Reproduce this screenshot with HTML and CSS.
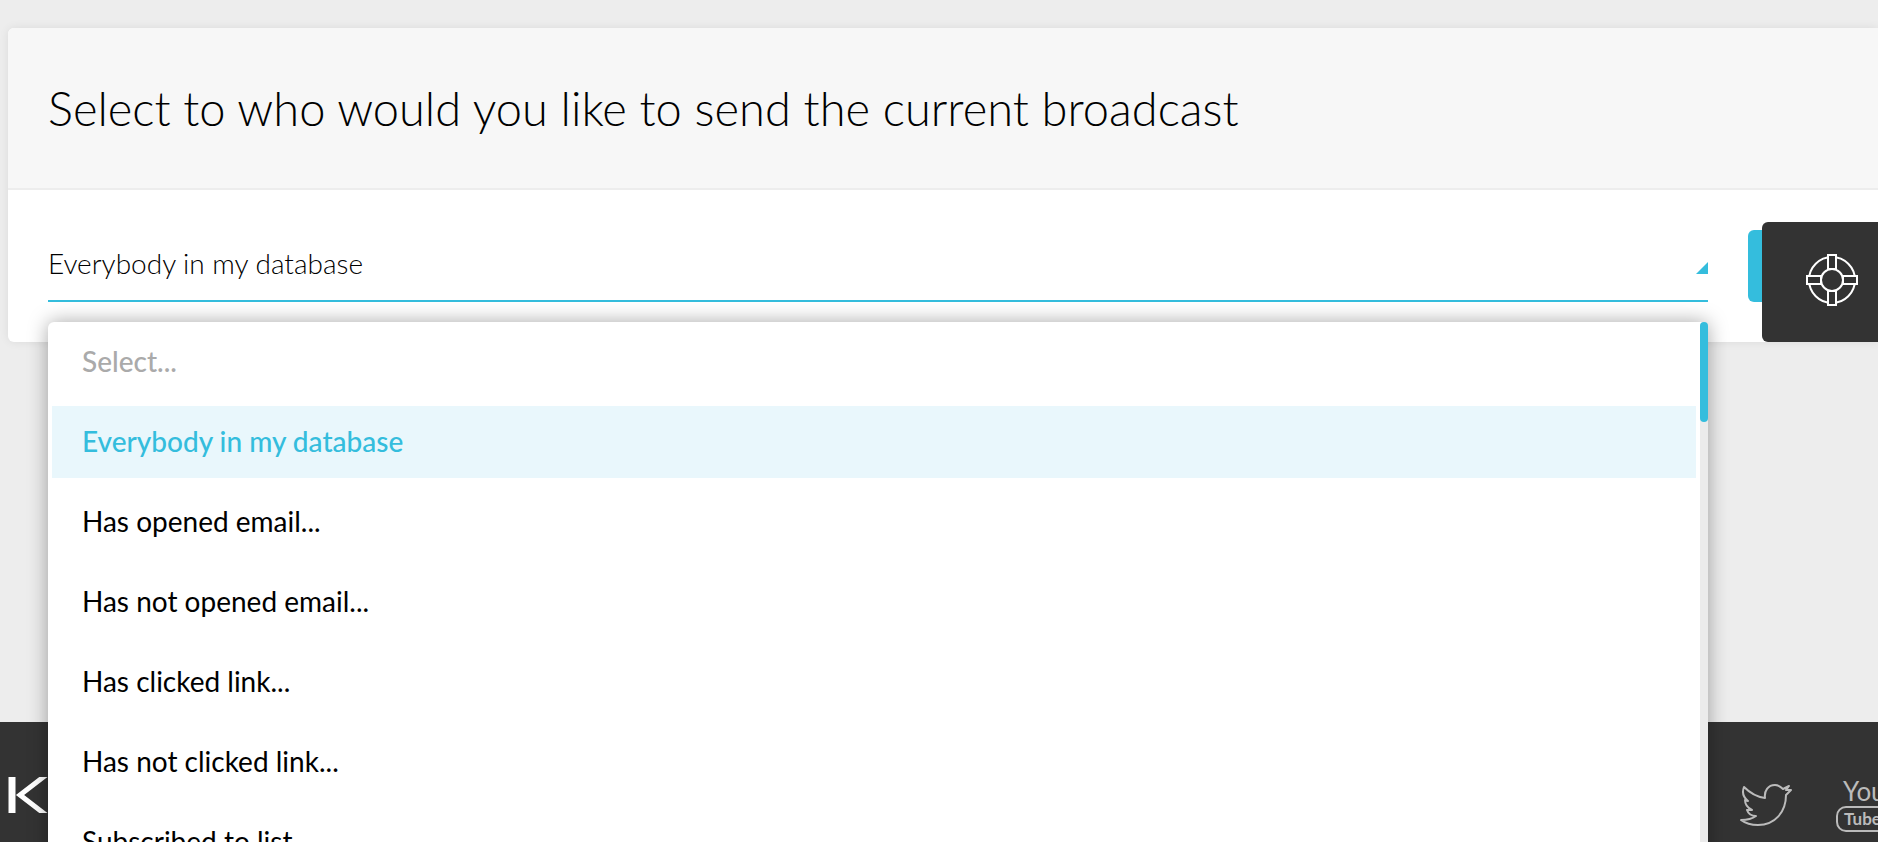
FILE: index.html
```html
<!DOCTYPE html>
<html lang="en">
  <head>
    <meta charset="UTF-8" />
    <meta name="viewport" content="width=device-width, initial-scale=1.0" />
    <title>Broadcast</title>
    <link rel="stylesheet" href="styles.css">
  </head>
  <body>
    <div class="page">
      <main class="panel">
        <header class="panel-heading">
          <h1>Select to who would you like to send the current broadcast</h1>
        </header>

        <form class="panel-body">
          <div class="field">
            <select class="field-select" id="recipients" aria-label="Recipients">
              <option>Everybody in my database</option>
            </select>
            <span class="field-arrow"></span>

            <div class="dropdown">
              <ul class="dropdown-list" role="listbox" aria-label="Recipients">
                <li><button type="button" class="item placeholder" role="option">Select...</button></li>
                <li><button type="button" class="item active" role="option" aria-selected="true">Everybody in my database</button></li>
                <li><button type="button" class="item" role="option">Has opened email...</button></li>
                <li><button type="button" class="item" role="option">Has not opened email...</button></li>
                <li><button type="button" class="item" role="option">Has clicked link...</button></li>
                <li><button type="button" class="item" role="option">Has not clicked link...</button></li>
                <li><button type="button" class="item" role="option">Subscribed to list...</button></li>
              </ul>
              <div class="scroll-track"><div class="scroll-thumb"></div></div>
            </div>
          </div>
          <button type="button" class="add-btn" aria-label="Add"></button>
        </form>

        <button type="button" class="help-btn" aria-label="Help">
          <svg width="54" height="54" viewBox="0 0 54 54" fill="none" stroke="#fff" stroke-width="2">
            <circle cx="27" cy="27" r="23" />
            <circle cx="27" cy="27" r="11" />
            <g fill="#333">
              <rect x="23" y="2" width="8" height="14" />
              <rect x="23" y="38" width="8" height="14" />
              <rect x="2" y="23" width="14" height="8" />
              <rect x="38" y="23" width="14" height="8" />
            </g>
          </svg>
        </button>
      </main>

      <footer class="footer">
        <a href="#" class="logo" aria-label="Home">
          <svg width="40" height="36" viewBox="0 0 40 36" fill="none" stroke="#fff">
            <path stroke-width="7" d="M4 0v36" />
            <path stroke-width="5" d="M38 -2L12 18L38 38" />
          </svg>
        </a>
        <nav class="social">
          <a href="#" aria-label="Twitter">
            <svg width="52" height="44" viewBox="0 0 52 44" fill="none" stroke="#bbb" stroke-width="2" stroke-linejoin="round">
              <path d="M4 3C10 9 17 13 25 14C24 7 28 1 35 1C39 1 41 3 43 5L49 2L46 6L51 6L46 11C46 28 35 41 18 41C11 41 5 39 1 36C7 36 12 35 16 32C11 32 8 29 7 26H12C8 24 5 20 5 16L8 17C3 13 2 8 4 3Z" />
            </svg>
          </a>
          <a href="#" aria-label="YouTube">
            <svg class="youtube" width="52" height="54" viewBox="0 0 52 54">
              <text class="you" x="7" y="22">You</text>
              <rect x="1" y="28" width="50" height="24" rx="9" fill="none" stroke="#bbb" stroke-width="2" />
              <text class="tube" x="8" y="46">Tube</text>
            </svg>
          </a>
        </nav>
      </footer>
    </div>
  </body>
</html>
```

FILE: styles.css
```css
* {
  box-sizing: border-box;
}
body {
  margin: 0;
  background: #ededed;
  color: #000;
  font-family: Lato, sans-serif;
}
button {
  border: none;
  font-family: inherit;
  cursor: pointer;
}
.page {
  display: flex;
  flex-direction: column;
  justify-content: space-between;
  height: 100vh;
  min-height: 600px;
  overflow: hidden;
}
.panel {
  position: relative;
  z-index: 1;
  margin: 28px 0 0 8px;
  background: #fff;
  border-radius: 6px 0 0 6px;
  box-shadow: 0 0 10px rgba(0, 0, 0, 0.08);
}
.panel-heading {
  padding: 50px 40px;
  background: #f7f7f7;
  border-bottom: 2px solid #ededed;
  border-radius: 6px 0 0 0;
}
h1 {
  margin: 0;
  font-size: 47px;
  line-height: 60px;
  font-weight: 300;
}
.panel-body {
  display: grid;
  grid-template-columns: 1fr 130px;
  gap: 40px;
  padding: 40px 0 40px 40px;
}
.field {
  position: relative;
}
.field-select {
  display: block;
  width: 100%;
  height: 72px;
  padding: 0 30px 4px 0;
  border: none;
  border-bottom: 2px solid #34bddd;
  border-radius: 0;
  background: none;
  appearance: none;
  color: #000;
  font-family: inherit;
  font-size: 28px;
  font-weight: 300;
  outline: none;
}
.field-arrow {
  position: absolute;
  right: 0;
  top: 32px;
  border-bottom: 12px solid #34bddd;
  border-left: 12px solid transparent;
  pointer-events: none;
}
.dropdown {
  position: absolute;
  top: 92px;
  left: 0;
  right: 0;
  background: #fff;
  border-radius: 6px;
  box-shadow: 0 0 20px rgba(0, 0, 0, 0.35);
}
.dropdown-list {
  margin: 0;
  padding: 4px 12px 4px 4px;
  list-style: none;
}
.item {
  display: block;
  width: 100%;
  height: 72px;
  margin-bottom: 8px;
  padding: 0 30px 2px;
  background: none;
  color: #000;
  font-size: 28px;
  font-weight: 400;
  text-align: left;
}
.item.placeholder {
  color: #aaa;
  font-weight: 500;
}
.item.active {
  background: #e9f7fc;
  color: #34bddd;
  font-weight: 500;
}
.scroll-track {
  position: absolute;
  top: 0;
  right: 0;
  bottom: 0;
  width: 8px;
  background: #ebebeb;
  border-radius: 4px;
}
.scroll-thumb {
  height: 100px;
  background: #34bddd;
  border-radius: 4px;
}
.add-btn {
  height: 72px;
  background: #34bddd;
  border-radius: 6px;
}
.help-btn {
  position: absolute;
  right: 0;
  bottom: 0;
  display: flex;
  align-items: center;
  width: 116px;
  height: 120px;
  padding: 0 0 4px 43px;
  background: #333;
  border-radius: 6px 0 0 6px;
}
.footer {
  display: flex;
  justify-content: space-between;
  align-items: flex-start;
  height: 120px;
  padding: 55px 0 0 8px;
  background: #333;
}
.footer svg {
  display: block;
}
.social {
  display: flex;
  align-items: center;
  gap: 44px;
  padding-top: 2px;
  margin-right: -10px;
}
.youtube {
  fill: #bbb;
}
.you {
  font-size: 26px;
}
.tube {
  font-size: 17px;
  font-weight: bold;
}
```
